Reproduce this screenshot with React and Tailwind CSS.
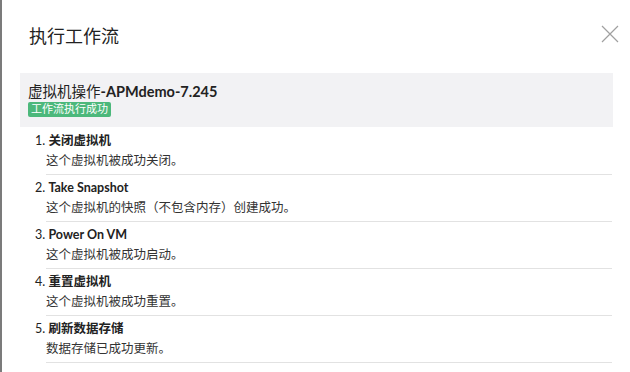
import React from "react";

const items = [
  { n: "1.", t: "关闭虚拟机", d: "这个虚拟机被成功关闭。" },
  { n: "2.", t: "Take Snapshot", d: "这个虚拟机的快照（不包含内存）创建成功。" },
  { n: "3.", t: "Power On VM", d: "这个虚拟机被成功启动。" },
  { n: "4.", t: "重置虚拟机", d: "这个虚拟机被成功重置。" },
  { n: "5.", t: "刷新数据存储", d: "数据存储已成功更新。" },
];

export default function App() {
  return (
    <div
      className="flex h-[372px] w-[630px] overflow-hidden bg-white text-[#222]"
      style={{ fontFamily: 'Lato, "Noto Sans CJK SC", sans-serif' }}
    >
      <div className="w-[2px] shrink-0 bg-[#7b7b7b]" />
      <div className="flex flex-1 flex-col">
        <div className="flex h-[49px] items-start justify-between pl-[27px] pr-[11px] pt-[24px]">
          <div className="h-[24px] text-[18px] leading-[24px] text-[#222]">执行工作流</div>
          <svg width="18" height="18" viewBox="0 0 18 18" className="mt-[1px]">
            <path d="M1 1L17 17M17 1L1 17" stroke="#a0a0a0" strokeWidth="1.2" fill="none" />
          </svg>
        </div>
        <div className="ml-[18px] mr-[17px] mt-[24px]">
          <div className="h-[54px] bg-[#f2f2f4] pl-[8px] pt-[9px]">
            <div className="flex h-[20px] items-center text-[14.5px] text-[#222]">
              <span>虚拟机操作</span>
              <span className="font-bold">-APMdemo-7.245</span>
            </div>
            <div className="flex h-[15px] w-fit items-center rounded-[2px] bg-[#4cb87b] px-[3px] text-[11px] text-white">
              工作流执行成功
            </div>
          </div>
          <div className="pt-[1px] pr-[1px]">
            {items.map((it) => (
              <div key={it.n} className="ml-[26px] border-b border-[#e2e2e2] pt-[4px] pb-[4px]">
                <div className="-ml-[11px] flex h-[18px] items-center whitespace-pre text-[12.5px] text-[#222]">
                  <span className="font-normal">{it.n} </span>
                  <span className="font-bold">{it.t}</span>
                </div>
                <div className="mt-[2px] flex h-[18px] items-center text-[12.5px] text-[#333]">{it.d}</div>
              </div>
            ))}
          </div>
        </div>
      </div>
    </div>
  );
}
